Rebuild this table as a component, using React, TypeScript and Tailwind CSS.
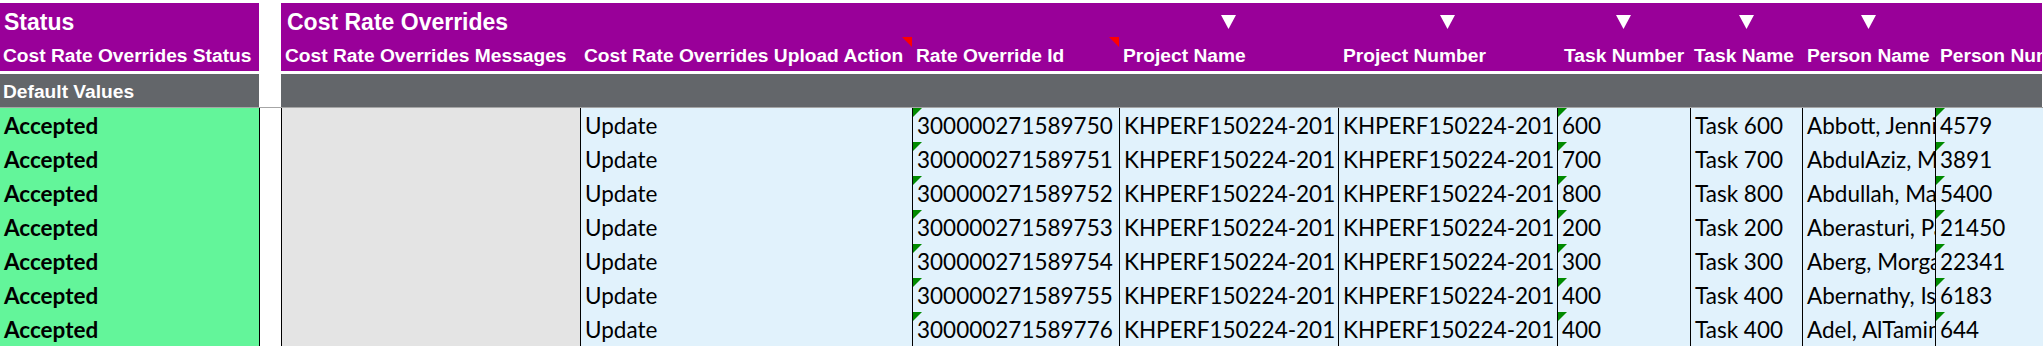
import React from "react";

type Col = {
  key: string;
  w: string;
  label: string;
  hpad: string;
  bg: string;
  red?: boolean;
  green?: boolean;
  tri?: boolean;
};

const cols: Col[] = [
  { key: "msg", w: "w-[299px]", label: "Cost Rate Overrides Messages", hpad: "pl-[4px]", bg: "bg-[#e4e4e4]" },
  { key: "action", w: "w-[332px]", label: "Cost Rate Overrides Upload Action", hpad: "pl-[4px]", bg: "bg-[#e1f2fc]", red: true },
  { key: "id", w: "w-[207px]", label: "Rate Override Id", hpad: "pl-[4px]", bg: "bg-[#e1f2fc]", red: true, green: true },
  { key: "pname", w: "w-[219px]", label: "Project Name", hpad: "pl-[4px]", bg: "bg-[#e1f2fc]", tri: true },
  { key: "pnum", w: "w-[219px]", label: "Project Number", hpad: "pl-[5px]", bg: "bg-[#e1f2fc]", tri: true },
  { key: "tnum", w: "w-[133px]", label: "Task Number", hpad: "pl-[7px]", bg: "bg-[#e1f2fc]", tri: true, green: true },
  { key: "tname", w: "w-[112px]", label: "Task Name", hpad: "pl-[4px]", bg: "bg-[#e1f2fc]", tri: true },
  { key: "person", w: "w-[133px]", label: "Person Name", hpad: "pl-[5px]", bg: "bg-[#e1f2fc]", tri: true },
  { key: "personNum", w: "w-[200px]", label: "Person Number", hpad: "pl-[5px]", bg: "bg-[#e1f2fc]", green: true },
];

const rows: Record<string, string>[] = [
  { msg: "", action: "Update", id: "300000271589750", pname: "KHPERF150224-201", pnum: "KHPERF150224-201", tnum: "600", tname: "Task 600", person: "Abbott, Jennifer", personNum: "4579" },
  { msg: "", action: "Update", id: "300000271589751", pname: "KHPERF150224-201", pnum: "KHPERF150224-201", tnum: "700", tname: "Task 700", person: "AbdulAziz, Mohammed", personNum: "3891" },
  { msg: "", action: "Update", id: "300000271589752", pname: "KHPERF150224-201", pnum: "KHPERF150224-201", tnum: "800", tname: "Task 800", person: "Abdullah, Maryam", personNum: "5400" },
  { msg: "", action: "Update", id: "300000271589753", pname: "KHPERF150224-201", pnum: "KHPERF150224-201", tnum: "200", tname: "Task 200", person: "Aberasturi, Pablo", personNum: "21450" },
  { msg: "", action: "Update", id: "300000271589754", pname: "KHPERF150224-201", pnum: "KHPERF150224-201", tnum: "300", tname: "Task 300", person: "Aberg, Morgan", personNum: "22341" },
  { msg: "", action: "Update", id: "300000271589755", pname: "KHPERF150224-201", pnum: "KHPERF150224-201", tnum: "400", tname: "Task 400", person: "Abernathy, Isaac", personNum: "6183" },
  { msg: "", action: "Update", id: "300000271589776", pname: "KHPERF150224-201", pnum: "KHPERF150224-201", tnum: "400", tname: "Task 400", person: "Adel, AlTamimi", personNum: "644" },
];

const headFont = "font-['Liberation_Sans',Arial,sans-serif] font-bold text-white";
const dataFont = "font-['Lato',sans-serif]";

function DownTri() {
  return (
    <svg width="15" height="14" viewBox="0 0 15 14">
      <polygon points="0,0 15,0 7.5,14" fill="#ffffff" />
    </svg>
  );
}

function RedMark() {
  return (
    <svg className="absolute top-0 right-0" width="10" height="10" viewBox="0 0 10 10">
      <polygon points="0,0 10,0 10,10" fill="#ff0000" />
    </svg>
  );
}

function GreenMark() {
  return (
    <svg className="absolute top-0 left-0" width="9" height="9" viewBox="0 0 9 9">
      <polygon points="0,0 9,0 0,9" fill="#008a00" />
    </svg>
  );
}

export default function App() {
  return (
    <div className="w-[2043px] h-[347px] overflow-hidden bg-white pt-[3px]">
      {/* Purple header */}
      <div className={`flex h-[68px] ${headFont}`}>
        <div className="w-[259px] shrink-0 bg-[#990099] flex flex-col">
          <div className="h-[34px] flex items-center pt-[4px] pl-[4px] text-[23px] whitespace-nowrap">Status</div>
          <div className="h-[34px] flex items-center pt-[5px] pl-[3px] text-[19.2px] whitespace-nowrap">Cost Rate Overrides Status</div>
        </div>
        <div className="w-[22px] shrink-0" />
        <div className="flex-1 bg-[#990099] flex flex-col overflow-hidden mr-[1px]">
          <div className="h-[34px] flex">
            {cols.map((c, i) => (
              <div key={c.key} className={`${c.w} shrink-0 flex items-center pt-[4px] ${i === 0 ? "justify-start pl-[6px]" : "justify-center"}`}>
                {i === 0 ? (
                  <span className="text-[23px] whitespace-nowrap">Cost Rate Overrides</span>
                ) : c.tri ? (
                  <DownTri />
                ) : null}
              </div>
            ))}
          </div>
          <div className="h-[34px] flex">
            {cols.map((c) => (
              <div key={c.key} className={`${c.w} shrink-0 relative flex items-center pt-[5px] ${c.hpad} text-[19.2px] whitespace-nowrap`}>
                {c.label}
                {c.red && <RedMark />}
              </div>
            ))}
          </div>
        </div>
      </div>

      {/* white spacer */}
      <div className="h-[3px]" />

      {/* Default values row */}
      <div className={`flex h-[33px] ${headFont}`}>
        <div className="w-[259px] shrink-0 bg-[#63666a] flex items-center pt-[3px] pl-[3px] text-[19.2px] whitespace-nowrap">Default Values</div>
        <div className="w-[22px] shrink-0" />
        <div className="flex-1 bg-[#63666a] mr-[1px]" />
      </div>

      {/* separator line */}
      <div className="h-px bg-[#a6a6a6]" />

      {/* Data rows */}
      {rows.map((r, ri) => (
        <div key={ri} className={`flex h-[34px] ${dataFont} text-[22.5px] text-black`}>
          <div className="w-[259px] shrink-0 bg-[#63f59a] flex items-center pt-[2px] pl-[4px] font-bold whitespace-nowrap">Accepted</div>
          <div className="w-[22px] shrink-0 border-l border-black bg-white" />
          {cols.map((c) => (
            <div key={c.key} className={`${c.w} shrink-0 relative border-l border-black ${c.bg} flex items-center pt-[2px] pl-[4px] overflow-hidden whitespace-nowrap`}>
              {c.green && <GreenMark />}
              {r[c.key]}
            </div>
          ))}
        </div>
      ))}
    </div>
  );
}
